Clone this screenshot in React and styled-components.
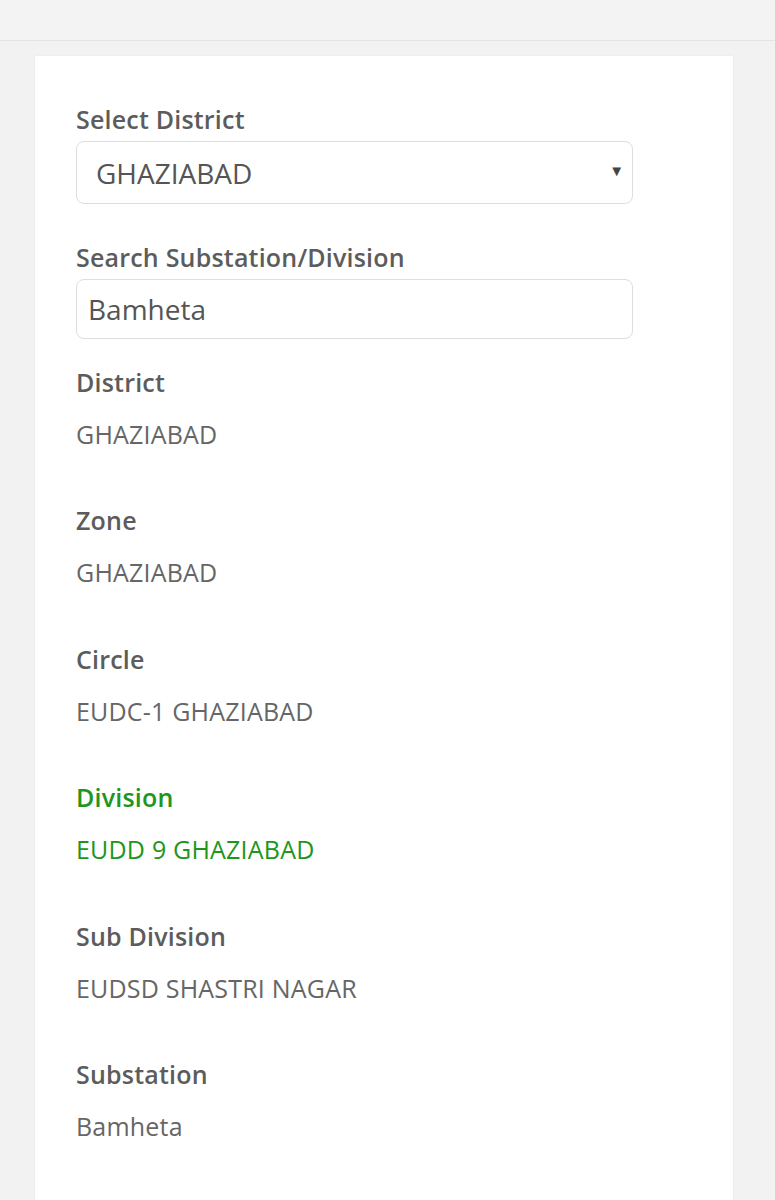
import styled, { createGlobalStyle } from 'styled-components';

const GlobalStyle = createGlobalStyle`
  html, body {
    margin: 0;
    padding: 0;
    background: #f2f2f2;
    font-family: "Open Sans", "Noto Sans", sans-serif;
  }
`;

const TopBar = styled.div`
  height: 40px;
  background: #f3f3f3;
  border-bottom: 1px solid #e4e4e4;
`;

const Page = styled.div`
  padding: 15px 42px 0 35px;
`;

const Card = styled.div`
  background: #fff;
  box-shadow: 0 0 2px rgba(0, 0, 0, 0.06);
  padding: 49px 100px 60px 41px;
  min-height: 1100px;
`;

const Label = styled.div`
  font-size: 25px;
  line-height: 29px;
  font-weight: 600;
  letter-spacing: 0.2px;
  color: ${p => (p.$accent ? '#20961c' : '#5c5c5c')};
`;

const Field = styled.div`
  margin-bottom: ${p => p.$gap}px;
`;

const SelectBox = styled.div`
  margin-top: 7px;
  height: 61px;
  border: 1px solid #dedede;
  border-radius: 8px;
  display: flex;
  align-items: center;
  justify-content: space-between;
  padding: 0 8px 0 19px;
  font-size: 28px;
  color: #555;
`;

const Caret = styled.span`
  font-size: 15px;
  color: #444;
  margin-top: -6px;
`;

const Input = styled.div`
  margin-top: 7px;
  height: 58px;
  border: 1px solid #dedede;
  border-radius: 8px;
  display: flex;
  align-items: center;
  padding: 0 11px;
  font-size: 28px;
  color: #555;
`;

const Info = styled.div`
  margin-bottom: 57.4px;
`;

const Value = styled.div`
  margin-top: 22px;
  font-size: 25px;
  line-height: 30px;
  letter-spacing: 0.2px;
  color: ${p => (p.$accent ? '#20961c' : '#666')};
`;

const rows = [
  ['District', 'GHAZIABAD'],
  ['Zone', 'GHAZIABAD'],
  ['Circle', 'EUDC-1 GHAZIABAD'],
  ['Division', 'EUDD 9 GHAZIABAD', true],
  ['Sub Division', 'EUDSD SHASTRI NAGAR'],
  ['Substation', 'Bamheta'],
];

export default function App() {
  return (
    <>
      <GlobalStyle />
      <TopBar />
      <Page>
        <Card>
          <Field $gap={39}>
            <Label>Select District</Label>
            <SelectBox>
              GHAZIABAD
              <Caret>▼</Caret>
            </SelectBox>
          </Field>
          <Field $gap={29}>
            <Label>Search Substation/Division</Label>
            <Input>Bamheta</Input>
          </Field>
          {rows.map(([label, value, accent]) => (
            <Info key={label}>
              <Label $accent={accent}>{label}</Label>
              <Value $accent={accent}>{value}</Value>
            </Info>
          ))}
        </Card>
      </Page>
    </>
  );
}
